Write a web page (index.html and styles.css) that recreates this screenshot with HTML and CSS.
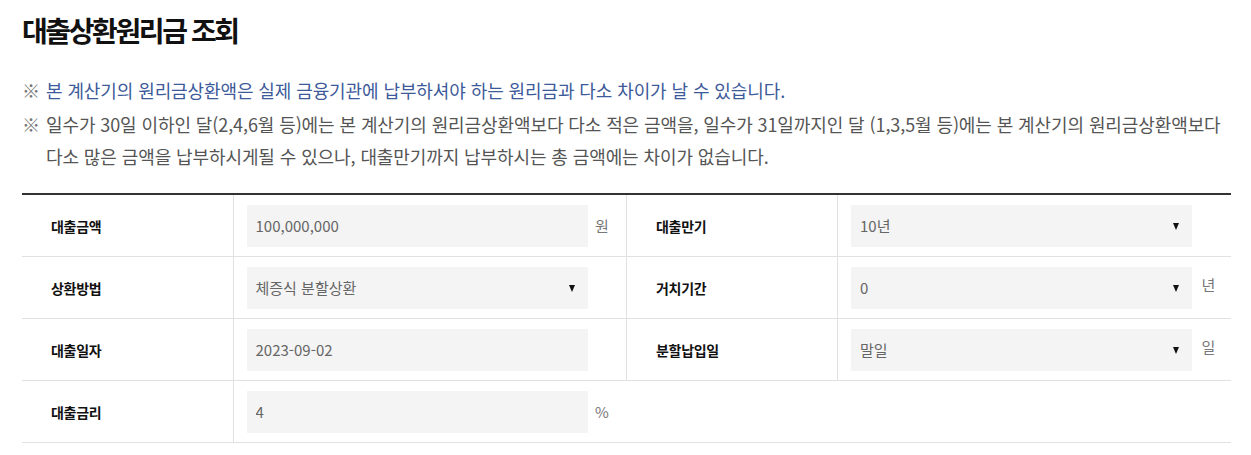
FILE: index.html
```html
<!DOCTYPE html>
<html lang="ko">

<head>
    <meta charset="utf-8" />
    <title>대출상환원리금 조회</title>
    <meta name="viewport" content="width=device-width, initial-scale=1">
    <link rel="stylesheet" href="styles.css">
</head>

<body>
    <div class="calc">
        <h2 class="calc-title">대출상환원리금 조회</h2>

        <ul class="calc-notes">
            <li class="calc-note calc-note-blue">본 계산기의 원리금상환액은 실제 금융기관에 납부하셔야 하는 원리금과 다소 차이가 날 수 있습니다.</li>
            <li class="calc-note">일수가 30일 이하인 달(2,4,6월 등)에는 본 계산기의 원리금상환액보다 다소 적은 금액을, 일수가 31일까지인 달 (1,3,5월 등)에는 본 계산기의 원리금상환액보다 다소 많은 금액을 납부하시게될 수 있으나, 대출만기까지 납부하시는 총 금액에는 차이가 없습니다.</li>
        </ul>

        <table class="calc-table">
            <colgroup>
                <col class="col-label">
                <col class="col-value">
                <col class="col-label">
                <col class="col-value">
            </colgroup>
            <tr>
                <th>대출금액</th>
                <td>
                    <input class="field" type="text" value="100,000,000">
                    <span class="unit">원</span>
                </td>
                <th>대출만기</th>
                <td>
                    <div class="field field-select">10년</div>
                </td>
            </tr>
            <tr>
                <th>상환방법</th>
                <td>
                    <div class="field field-select">체증식 분할상환</div>
                </td>
                <th>거치기간</th>
                <td>
                    <div class="field field-select">0</div>
                    <span class="unit unit-up">년</span>
                </td>
            </tr>
            <tr>
                <th>대출일자</th>
                <td>
                    <input class="field" type="text" value="2023-09-02">
                </td>
                <th>분할납입일</th>
                <td>
                    <div class="field field-select">말일</div>
                    <span class="unit unit-up">일</span>
                </td>
            </tr>
            <tr>
                <th>대출금리</th>
                <td colspan="3">
                    <input class="field" type="text" value="4">
                    <span class="unit">%</span>
                </td>
            </tr>
        </table>
    </div>
</body>

</html>
```

FILE: styles.css
```css
body,
html {
    margin: 0;
    padding: 0;
    background: #fff;
}

body {
    font-family: "Noto Sans CJK KR", "Noto Sans", sans-serif;
    color: #333;
}

.calc {
    padding: 0 20px 0 22px;
}

.calc-title {
    margin: 0;
    padding-top: 10px;
    font-size: 28px;
    line-height: 40px;
    font-weight: 700;
    letter-spacing: -2.4px;
    color: #111;
}

.calc-notes {
    list-style: none;
    margin: 24px 0 0 0;
    padding: 0;
}

.calc-note {
    position: relative;
    padding-left: 24px;
    font-size: 18px;
    line-height: 32px;
    letter-spacing: -0.1px;
    color: #555;
}

.calc-note + .calc-note {
    margin-top: 2px;
}

.calc-note::before {
    content: "※";
    position: absolute;
    left: 0;
    top: 0;
    color: #777;
}

.calc-note-blue {
    color: #3d5a9a;
}

.calc-table {
    width: 100%;
    margin-top: 21px;
    border-collapse: collapse;
    border-top: 2px solid #333;
    table-layout: fixed;
}

.col-label {
    width: 211px;
}

.calc-table th,
.calc-table td {
    height: 61px;
    padding: 0;
    border-bottom: 1px solid #e1e1e1;
    vertical-align: middle;
}

.calc-table th {
    padding-left: 29px;
    text-align: left;
    font-size: 14px;
    font-weight: 700;
    letter-spacing: -0.3px;
    color: #111;
}

.calc-table td {
    padding-left: 13px;
    border-left: 1px solid #e1e1e1;
    white-space: nowrap;
}

.calc-table td + th {
    border-left: 1px solid #e1e1e1;
}

.field {
    box-sizing: border-box;
    display: inline-block;
    vertical-align: middle;
    width: 341px;
    height: 42px;
    margin: 0;
    padding: 0 9px;
    border: 0;
    background: #f4f4f4;
    font-family: inherit;
    font-size: 15px;
    line-height: 42px;
    color: #666;
    outline: none;
}

.field-select {
    position: relative;
    padding-left: 9px;
}

.field-select::after {
    content: "";
    position: absolute;
    right: 13px;
    top: 18px;
    border-left: 3.5px solid transparent;
    border-right: 3.5px solid transparent;
    border-top: 7px solid #111;
}

.unit {
    display: inline-block;
    vertical-align: middle;
    margin-left: 3px;
    font-size: 15px;
    color: #777;
}

.unit-up {
    margin-left: 5px;
    position: relative;
    top: -3px;
}
```
